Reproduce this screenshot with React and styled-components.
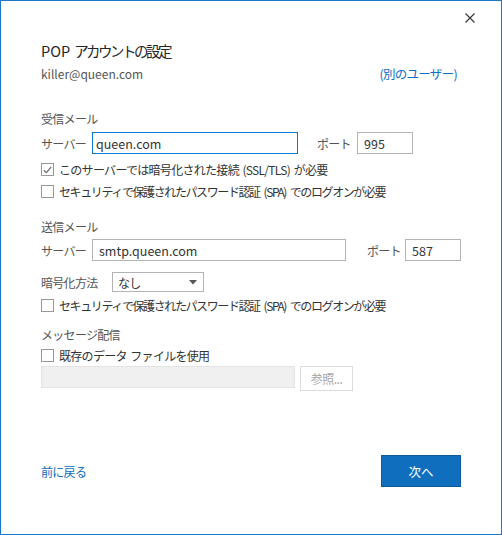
import styled, { createGlobalStyle } from "styled-components";

const GlobalStyle = createGlobalStyle`
  html, body {
    margin: 0;
    padding: 0;
    background: #ffffff;
  }
  body {
    font-family: "Noto Sans CJK JP", "Noto Sans", sans-serif;
  }
`;

const Window = styled.div`
  box-sizing: border-box;
  width: 502px;
  height: 535px;
  border: 1px solid #1c78c8;
  background: #ffffff;
  display: flex;
  flex-direction: column;
  padding: 0 40px 47px 40px;
  color: #444444;
  font-size: 12px;
  letter-spacing: -0.7px;
  word-spacing: 1.5px;
`;

const TitleBar = styled.div`
  height: 32px;
  display: flex;
  justify-content: flex-end;
  align-items: center;
  margin-right: -22px;
`;

const CloseButton = styled.button`
  width: 26px;
  height: 26px;
  border: none;
  background: transparent;
  padding: 0;
  display: flex;
  align-items: center;
  justify-content: center;
  margin-top: 1px;
`;

const Title = styled.h1`
  margin: 7px 0 0;
  font-size: 14.5px;
  line-height: 22px;
  font-weight: 400;
  letter-spacing: -2.5px;
  color: #262626;
`;

const Latin = styled.span`
  letter-spacing: 0;
  margin-right: 4px;
`;

const AccountRow = styled.div`
  display: flex;
  justify-content: space-between;
  align-items: center;
  height: 18px;
  margin-top: 2px;
  font-size: 12.5px;
  color: #555555;
`;

const Email = styled.span`
  font-size: 12px;
  letter-spacing: 0;
`;

const Link = styled.a`
  color: #106ebe;
  text-decoration: none;
  cursor: pointer;
  margin-right: ${(p) => p.$gap || 0}px;
`;

const SectionLabel = styled.div`
  height: 18px;
  line-height: 18px;
  margin-top: ${(p) => p.$top}px;
  color: #555555;
`;

const FieldRow = styled.div`
  display: flex;
  align-items: center;
  margin-top: ${(p) => p.$top}px;
`;

const Label = styled.span`
  width: ${(p) => p.$width}px;
  flex: none;
  color: #555555;
`;

const TextBox = styled.input`
  box-sizing: border-box;
  width: ${(p) => p.$width}px;
  height: 22px;
  flex: none;
  border: 1px solid ${(p) => (p.$focused ? "#0f78d4" : "#b3b3b3")};
  padding: 0 6px 0 ${(p) => (p.$focused ? 3 : 6)}px;
  font: inherit;
  font-size: 12.5px;
  letter-spacing: 0;
  color: #333333;
  background: ${(p) => (p.disabled ? "#f0f0f0" : "#ffffff")};
  outline: none;
  ${(p) => p.disabled && "border-color: #e3e3e3;"}
`;

const PortLabel = styled.span`
  margin-left: ${(p) => p.$left}px;
  width: ${(p) => p.$width}px;
  flex: none;
  color: #555555;
`;

const Select = styled.div`
  box-sizing: border-box;
  width: 92px;
  height: 20px;
  border: 1px solid #b3b3b3;
  display: flex;
  align-items: center;
  justify-content: space-between;
  padding: 0 6px 0 5px;
  color: #333333;
`;

const CheckRow = styled.label`
  display: flex;
  align-items: center;
  height: ${(p) => p.$height || 22}px;
  margin-top: ${(p) => p.$top || 0}px;
  color: #333333;
  letter-spacing: ${(p) => (p.$tight ? -1.4 : -0.7)}px;
  word-spacing: ${(p) => (p.$tight ? 2.5 : 1.5)}px;
`;

const Box = styled.span`
  box-sizing: border-box;
  width: 13px;
  height: 13px;
  border: 1px solid #999999;
  background: #ffffff;
  margin-right: 5px;
  display: flex;
  align-items: center;
  justify-content: center;
`;

const BrowseRow = styled.div`
  display: flex;
  align-items: flex-start;
  gap: 5px;
`;

const BrowseButton = styled.button`
  box-sizing: border-box;
  width: 53px;
  height: 25px;
  border: 1px solid #dcdcdc;
  background: #ffffff;
  color: #a6a6a6;
  font: inherit;
  font-size: 12px;
  letter-spacing: -0.5px;
  padding: 0;
`;

const Footer = styled.div`
  margin-top: auto;
  display: flex;
  justify-content: space-between;
  align-items: center;
`;

const NextButton = styled.button`
  box-sizing: border-box;
  width: 80px;
  height: 32px;
  background: #106ebe;
  border: 1px solid #0d5a9c;
  color: #ffffff;
  font: inherit;
  font-size: 12.5px;
  padding: 0;
`;

function Checkbox({ checked, children, top, height, tight }) {
  return (
    <CheckRow $top={top} $height={height} $tight={tight}>
      <Box>
        {checked && (
          <svg width="9" height="8" viewBox="0 0 9 8">
            <path d="M0.8 4.2 L3.4 6.6 L8.2 0.9" fill="none" stroke="#6b6b6b" strokeWidth="1.2" />
          </svg>
        )}
      </Box>
      {children}
    </CheckRow>
  );
}

export default function App() {
  return (
    <>
      <GlobalStyle />
      <Window>
        <TitleBar>
          <CloseButton aria-label="閉じる">
            <svg width="10" height="10" viewBox="0 0 10 10">
              <path d="M0.5 0.5 L9.5 9.5 M9.5 0.5 L0.5 9.5" stroke="#333333" strokeWidth="1.1" />
            </svg>
          </CloseButton>
        </TitleBar>

        <Title>
          <Latin>POP</Latin>アカウントの設定
        </Title>
        <AccountRow>
          <Email>killer@queen.com</Email>
          <Link $gap={4}>(別のユーザー)</Link>
        </AccountRow>

        <SectionLabel $top={28}>受信メール</SectionLabel>
        <FieldRow $top={4}>
          <Label $width={51}>サーバー</Label>
          <TextBox $width={206} $focused defaultValue="queen.com" />
          <PortLabel $left={19} $width={40}>ポート</PortLabel>
          <TextBox $width={56} defaultValue="995" />
        </FieldRow>
        <Checkbox checked top={4.5}>
          このサーバーでは暗号化された接続 (SSL/TLS) が必要
        </Checkbox>
        <Checkbox tight>セキュリティで保護されたパスワード認証 (SPA) でのログオンが必要</Checkbox>

        <SectionLabel $top={15.5}>送信メール</SectionLabel>
        <FieldRow $top={3}>
          <Label $width={51}>サーバー</Label>
          <TextBox $width={254} defaultValue="smtp.queen.com" />
          <PortLabel $left={21} $width={38}>ポート</PortLabel>
          <TextBox $width={56} defaultValue="587" />
        </FieldRow>
        <FieldRow $top={11}>
          <Label $width={71}>暗号化方法</Label>
          <Select>
            <span>なし</span>
            <svg width="8" height="5" viewBox="0 0 8 5">
              <path d="M0 0 H8 L4 4.5 Z" fill="#555555" />
            </svg>
          </Select>
        </FieldRow>
        <Checkbox tight top={2}>セキュリティで保護されたパスワード認証 (SPA) でのログオンが必要</Checkbox>

        <SectionLabel $top={10}>メッセージ配信</SectionLabel>
        <Checkbox height={22}>既存のデータ ファイルを使用</Checkbox>
        <BrowseRow>
          <TextBox $width={254} disabled />
          <BrowseButton disabled>参照...</BrowseButton>
        </BrowseRow>

        <Footer>
          <Link>前に戻る</Link>
          <NextButton>次へ</NextButton>
        </Footer>
      </Window>
    </>
  );
}
